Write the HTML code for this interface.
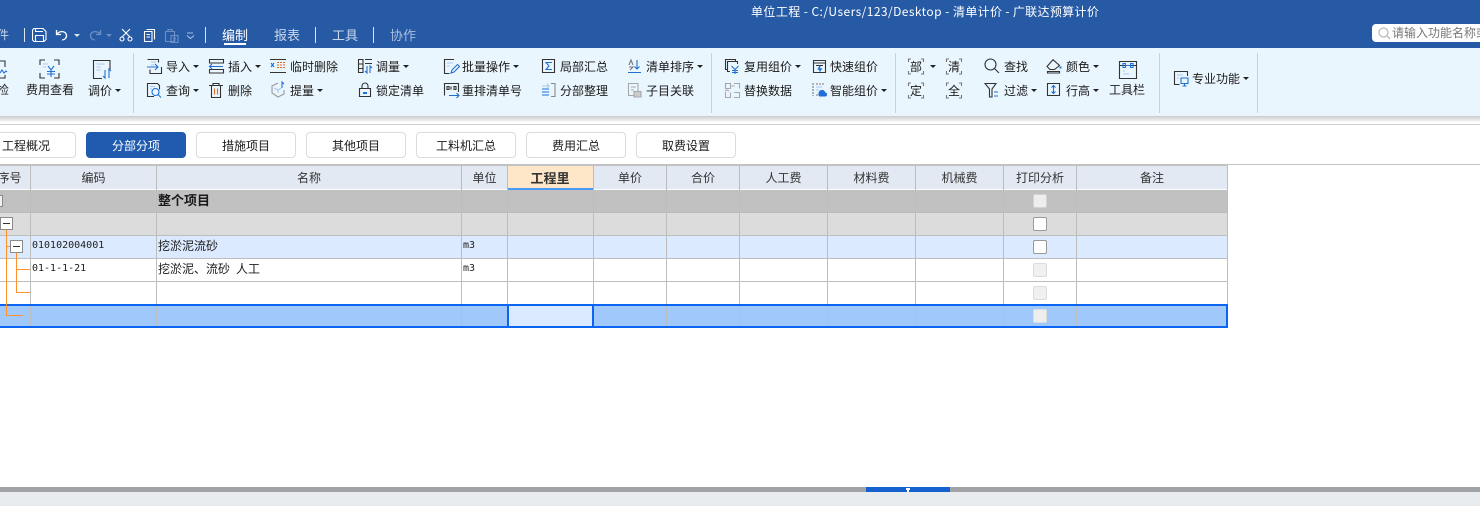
<!DOCTYPE html>
<html lang="zh"><head><meta charset="utf-8"><title>单位工程</title>
<style>
html,body{margin:0;padding:0;width:1480px;height:506px;overflow:hidden;background:#fff}
body{position:relative;font:12px/16px "WenQuanYi Zen Hei","Noto Sans CJK SC",sans-serif;color:#1a1a1a}
div,span,svg{position:absolute;box-sizing:border-box}
.t{white-space:nowrap;line-height:16px;height:16px}
.w{color:#fff}.m{color:#c9d8ec;font-size:14px}
.c{width:0;height:0;border:3px solid transparent;border-top:3.5px solid #222;border-bottom:0}
.sep{width:1px;background:#c9d0d6;top:53px;height:60px}
.tb{top:132px;height:26px;width:100px;background:#fff;border:1px solid #dcdcdc;border-radius:4px;text-align:center;line-height:25px}
.h{top:166px;height:23px;background:#e2e9f2;border-right:1px solid #bdbdbd;text-align:center;line-height:24px;color:#333}
.v{top:166px;height:161px;width:1px;background:#bdbdbd}
.r{left:0;width:1228px;height:23px;border-bottom:1px solid #bdbdbd}
.chk{left:1033px;width:14px;height:14px;border:1px solid #999;border-radius:2px;background:#fff}
.dis{background:#f0f0f0;border-color:#dcdcdc}
.o{background:#ff9326}
.box{width:13px;height:13px;background:#fff;border:1px solid #8b8b8b}
.box:after{content:"";position:absolute;left:2px;top:5px;width:7px;height:1px;background:#333}
.mono{font:10px/16px "DejaVu Sans Mono",monospace;color:#222}
svg{fill:none;stroke:#333;stroke-width:1.1}
svg .b{stroke:#1f6fd6}svg .l{stroke:#a9c8f0}svg .g{stroke:#a8a8a8}
</style></head><body>

<div style="left:0;top:0;width:1480px;height:48px;background:#265aa5"></div>
<div class="t w" style="left:751px;top:4px;letter-spacing:.42px">单位工程 - C:/Users/123/Desktop - </div>
<div class="t w" style="left:953px;top:4px;letter-spacing:.33px">清单计价 - 广联达预算计价</div>
<div class="t m" style="left:-15px;top:27px;font-size:12px">文件</div>
<div style="left:24px;top:28px;width:1px;height:14px;background:#dce6f3"></div>
<svg style="left:32px;top:28px" width="15" height="14"><path stroke="#fff" d="M2 .5h9l3 3v8l-2 2H2l-1.500-1.500V2zM3.500 13.500V7.500h8v6M3.500 .5v3h7.500"/></svg>
<svg style="left:55px;top:28px" width="14" height="14"><path stroke="#fff" stroke-width="1.3" d="M1.500 2v4.500h4.500M1.800 6.500C4 2.500 11 2.500 11.500 7.500c.2 2.500-2 4.500-4.500 4.500"/></svg>
<div class="c" style="left:74px;top:34px;border-top-color:#dce6f3"></div>
<svg style="left:88px;top:28px" width="14" height="14"><path stroke="#6d8fc4" stroke-width="1.3" d="M12.500 2v4.500H8M12.200 6.500C10 2.500 3 2.500 2.500 7.500c-.2 2.500 2 4.500 4.500 4.500"/></svg>
<div class="c" style="left:106px;top:34px;border-top-color:#6d8fc4"></div>
<svg style="left:119px;top:28px" width="14" height="14"><path stroke="#fff" stroke-width="1.100" d="M3 1l8 8M11 1L3 9"/><circle stroke="#fff" cx="3" cy="11" r="2"/><circle stroke="#fff" cx="11" cy="11" r="2"/></svg>
<svg style="left:143px;top:28px" width="13" height="14"><path stroke="#fff" d="M1.500 3.500h7.500v10H1.500zM3.500 1.500h8v10M3.500 6.500h3.500M3.500 9h3.500"/></svg>
<svg style="left:164px;top:28px" width="16" height="15"><path stroke="#6d8fc4" d="M1.500 3.500h9v10h-9zM4 3.500v-2h4v2M7 7.500h7v7H7zM9 10h3M9 12h3"/></svg>
<svg style="left:186px;top:32px" width="9" height="8"><path stroke="#a9bfdf" d="M1 1h6M1 3.500l3.500 3 3.500-3"/></svg>
<div style="left:205px;top:27px;width:1px;height:16px;background:#dce6f3"></div>
<div class="t w" style="left:222px;top:27px;font-size:13px">编制</div>
<div style="left:224px;top:43px;width:22px;height:2px;background:#fff"></div>
<div class="t m" style="left:274px;top:27px;font-size:13px">报表</div>
<div style="left:315px;top:27px;width:1px;height:16px;background:#dce6f3"></div>
<div class="t m" style="left:332px;top:27px;font-size:13px">工具</div>
<div style="left:373px;top:27px;width:1px;height:16px;background:#dce6f3"></div>
<div class="t m" style="left:390px;top:27px;font-size:13px;color:#a9bfdf">协作</div>
<div style="left:1372px;top:24px;width:120px;height:18px;background:#fff;border-radius:4px"></div>
<svg style="left:1378px;top:27px" width="13" height="13"><circle stroke="#bbb" stroke-width="1.300" cx="5.500" cy="5.500" r="4.500"/><path stroke="#bbb" stroke-width="1.300" d="M9 9l3 3"/></svg>
<div class="t" style="left:1392px;top:25px;color:#777">请输入功能名称或</div>

<div style="left:0;top:48px;width:1480px;height:68px;background:#eaf6fe"></div>
<div style="left:0;top:116px;width:1480px;height:6px;background:linear-gradient(#c9cbd0,#fafafa)"></div>
<div style="left:0;top:124px;width:1480px;height:1px;background:#d0d0d0"></div>
<div class="sep" style="left:133px"></div><div class="sep" style="left:711px"></div><div class="sep" style="left:895px"></div><div class="sep" style="left:1159px"></div><div class="sep" style="left:1257px"></div>

<svg style="left:0;top:60px" width="10" height="22"><path d="M0 1h5v6M5 15v3H0"/><path class="b" d="M0 13l2-3 2 3 2-2 1 1"/></svg>
<div class="t" style="left:-3px;top:82px">检</div>
<svg style="left:39px;top:59px" width="22" height="22"><path d="M1 6V1h5M15 1h5v5M1 14v5h5M15 19h5v-5"/><path class="l" d="M4 5h5M4 8h3"/><path class="b" d="M9 7l3 4 3-4M12 11v7M8 12.500h8M8 15h8"/></svg>
<div class="t" style="left:26px;top:82px">费用查看</div>
<svg style="left:92px;top:59px" width="22" height="22"><path d="M10 19.500H1.500v-18h16.500v9"/><path class="l" d="M4.500 5h8M4.500 8h4M4.500 11h4"/><path class="b" d="M13 11v8l-2-2M17 19v-9l2 2"/></svg>
<div class="t" style="left:88px;top:83px">调价</div><div class="c" style="left:115px;top:89px"></div>

<svg style="left:146px;top:58px" width="17" height="17"><path d="M1.500 1.500h11v3M15.500 9v6.500H4v-4"/><path class="l" d="M5 4h5M5 7h3"/><path class="b" d="M1 9h11M9 6l3 3-3 3"/></svg>
<div class="t" style="left:166px;top:59px">导入</div><div class="c" style="left:193px;top:65px"></div>
<svg style="left:146px;top:82px" width="17" height="17"><path d="M8 14.500H1.500v-13h10l2 2v4"/><path class="l" d="M4 4.500h5M4 7h2"/><circle class="b" cx="9.500" cy="10" r="3.500"/><path class="b" d="M12 12.500l3 3"/></svg>
<div class="t" style="left:166px;top:83px">查询</div><div class="c" style="left:193px;top:89px"></div>

<svg style="left:208px;top:58px" width="17" height="17"><path d="M1.500 1.500h14v3.500h-14zM1.500 11.500h14v3.500h-14z"/><path class="b" d="M1 8.500h14M4 6l-2.500 2.500L4 11"/></svg>
<div class="t" style="left:228px;top:59px">插入</div><div class="c" style="left:255px;top:65px"></div>
<svg style="left:208px;top:82px" width="17" height="17"><path d="M1 3.500h14M5 3.500v-2h6v2M3.500 3.500v12h9v-12"/><path style="stroke:#e8661c" d="M6.500 6.500v6M9.500 6.500v6"/></svg>
<div class="t" style="left:228px;top:83px">删除</div>

<svg style="left:270px;top:58px" width="17" height="16"><path d="M0 1.500h16M0 14.500h16"/><path class="b" d="M1 5l3 4M4 5L1 9"/><path style="stroke:#e8661c;stroke-dasharray:2 1" d="M7 4.500h9M7 7h9M7 9.500h9"/></svg>
<div class="t" style="left:290px;top:59px">临时删除</div>
<svg style="left:270px;top:81px" width="17" height="17"><path style="stroke:#999" d="M8 2L2 5v7l6 4 6-3V9"/><path class="l" d="M4 7l4 2 3-2M8 9v3"/><path class="b" d="M12 7V1l2 2"/></svg>
<div class="t" style="left:290px;top:83px">提量</div><div class="c" style="left:317px;top:89px"></div>

<svg style="left:357px;top:58px" width="17" height="16"><path d="M1.500 1.500h4.500v13h-4.500zM1.500 6h4.500M1.500 10.500h4.500M8 1.500h7M8 5.500h7"/><path class="b" d="M10 8v7l-2-2M13 15V8l2 2"/></svg>
<div class="t" style="left:376px;top:59px">调量</div><div class="c" style="left:403px;top:65px"></div>
<svg style="left:358px;top:82px" width="15" height="16"><path d="M1.500 6.500h11v8h-11zM4 6.500V4a3 3 0 0 1 6 0v2.500"/><path class="b" stroke-width="2" d="M5 11h4"/></svg>
<div class="t" style="left:376px;top:83px">锁定清单</div>

<svg style="left:443px;top:58px" width="17" height="17"><path d="M11 1.500H1.500v14h5"/><path class="l" d="M4 5h6M4 8h3"/><path class="b" d="M8 15l1-3 5.500-5.500 2 2L11 14z"/></svg>
<div class="t" style="left:462px;top:59px">批量操作</div><div class="c" style="left:513px;top:65px"></div>
<svg style="left:443px;top:82px" width="17" height="17"><path d="M1.500 13.500V1.500h14V10"/><path d="M4 4.500v3h2v-3zM8 4.500v3M11 4.500v3h2v-3z"/><path class="b" d="M6 13.500h10M13.500 11l2.500 2.500-2.500 2.500"/></svg>
<div class="t" style="left:462px;top:83px">重排清单号</div>

<svg style="left:541px;top:58px" width="15" height="16"><path d="M1.500 1.500h12v13h-12z"/><path class="b" d="M11 4.500H5l3 3.500-3 3.500h6"/></svg>
<div class="t" style="left:560px;top:59px">局部汇总</div>
<svg style="left:541px;top:82px" width="15" height="16"><path style="stroke:#8a8a8a" d="M10 1.500h4v13h-4"/><path class="b" d="M1 7h7M1 10h7M1 13h7"/><path class="l" d="M1 4h7M6 1.500l2 2.500-2 2.500"/></svg>
<div class="t" style="left:560px;top:83px">分部整理</div>

<svg style="left:627px;top:58px" width="15" height="16"><path style="stroke:#777" d="M2 7l2-5 2 5M2 9h4l-3 3"/><path class="b" d="M10 2v9M7.500 8.500L10 11l2.500-2.500M1 14.500h13"/></svg>
<div class="t" style="left:646px;top:59px">清单排序</div><div class="c" style="left:697px;top:65px"></div>
<svg style="left:627px;top:82px" width="15" height="16"><path class="g" d="M11 9V1.500H1.500v12H7M4 5h5M4 8h3"/><path class="g" style="fill:#ccc" d="M7 9.500h7v5.500H7z"/></svg>
<div class="t" style="left:646px;top:83px">子目关联</div>

<svg style="left:724px;top:58px" width="17" height="17"><path d="M3.500 11.500h-2v-10h10v2M6 13.500H3.500v-10h10V6"/><path class="b" d="M7.500 8l3.500 3.500 3.500-3.500M11 11.500V16M8 12.500h6M8 14.500h6"/></svg>
<div class="t" style="left:744px;top:59px">复用组价</div><div class="c" style="left:795px;top:65px"></div>
<svg style="left:724px;top:82px" width="17" height="17"><path class="g" d="M1.500 1.500h5v5h-5zM10 1.500h5.500v5M1.500 10v5.500h5v-5M10 10.500h5.500v5H10M7.500 4h3M1 9l2-1 2 1"/></svg>
<div class="t" style="left:744px;top:83px">替换数据</div>

<svg style="left:812px;top:59px" width="15" height="15"><path d="M1.500 1.500h12v12h-12zM1.500 4h12M4 6.500h7"/><path class="b" stroke-width="1.500" d="M8 7L6.500 10h2.500l-1.500 2.500"/></svg>
<div class="t" style="left:830px;top:59px">快速组价</div>
<svg style="left:811px;top:82px" width="17" height="16"><path style="stroke:#777" stroke-dasharray="2 1" d="M2 1v13M5 2h8M5 13h5"/><path class="l" d="M5 5h6M5 8h3"/><path class="b" style="fill:#1f6fd6" d="M8 12a3 3 0 0 1 6-1c2 0 2 3 0 3H9c-1 0-1-1-1-2z"/></svg>
<div class="t" style="left:830px;top:83px">智能组价</div><div class="c" style="left:881px;top:89px"></div>

<svg style="left:907px;top:58px" width="18" height="17"><path style="stroke:#777" d="M4 1H1.500v3M14 1h2.500v3M1.500 13v3H4M16.500 13v3H14"/></svg>
<div class="t" style="left:910px;top:59px">部</div><div class="c" style="left:930px;top:65px"></div>
<svg style="left:907px;top:82px" width="18" height="17"><path style="stroke:#777" d="M4 1H1.500v3M14 1h2.500v3M1.500 13v3H4M16.500 13v3H14"/></svg>
<div class="t" style="left:910px;top:83px">定</div>
<svg style="left:945px;top:58px" width="18" height="17"><path style="stroke:#777" d="M4 1H1.500v3M14 1h2.500v3M1.500 13v3H4M16.500 13v3H14"/></svg>
<div class="t" style="left:948px;top:59px">清</div>
<svg style="left:945px;top:82px" width="18" height="17"><path style="stroke:#777" d="M4 1H1.500v3M14 1h2.500v3M1.500 13v3H4M16.500 13v3H14"/></svg>
<div class="t" style="left:948px;top:83px">全</div>

<svg style="left:984px;top:58px" width="16" height="16"><circle cx="6.500" cy="6.500" r="5.500"/><path d="M10.500 10.500l4.500 4.500"/></svg>
<div class="t" style="left:1004px;top:59px">查找</div>
<svg style="left:984px;top:82px" width="16" height="16"><path d="M1 1.500h11L8 7v8H5.500V7z"/><path class="b" d="M10 10h4M10 14h4"/></svg>
<div class="t" style="left:1004px;top:83px">过滤</div><div class="c" style="left:1031px;top:89px"></div>

<svg style="left:1046px;top:59px" width="16" height="15"><path d="M7 .7L13.500 6.500 8.500 10.500H4L1 7.500zM1.500 12.500h12v1.500h-12z"/><path class="b" stroke-width="2" d="M13.500 8.500h2"/></svg>
<div class="t" style="left:1066px;top:59px">颜色</div><div class="c" style="left:1093px;top:65px"></div>
<svg style="left:1046px;top:82px" width="15" height="15"><path d="M1.500 1.500h12v12h-12z"/><path class="b" d="M7.500 3.500v8M5.500 5.500l2-2 2 2M5.500 9.500l2 2 2-2"/></svg>
<div class="t" style="left:1066px;top:83px">行高</div><div class="c" style="left:1093px;top:89px"></div>

<svg style="left:1118px;top:60px" width="20" height="20"><path d="M1.500 1.500h17v17h-17zM1.500 5.500h17"/><path class="b" d="M5 3.500h2.500v4H5zM12.500 3.500h2.500v4h-2.500zM7.500 5.500h5"/><path class="l" d="M5 11h2M5 14h6"/></svg>
<div class="t" style="left:1109px;top:82px">工具栏</div>

<svg style="left:1173px;top:70px" width="16" height="17"><path d="M14.500 6V1.500h-13v13h5"/><path class="l" d="M4 5h6M4 8h2"/><path class="b" d="M8 8h7v5.500H8zM11.500 13.500V16M9.500 16h4"/></svg>
<div class="t" style="left:1192px;top:71px">专业功能</div><div class="c" style="left:1243px;top:77px"></div>

<div class="tb" style="left:-24px">工程概况</div>
<div class="tb" style="left:86px;background:#215bb0;border-color:#215bb0;color:#fff">分部分项</div>
<div class="tb" style="left:196px">措施项目</div>
<div class="tb" style="left:306px">其他项目</div>
<div class="tb" style="left:416px">工料机汇总</div>
<div class="tb" style="left:526px">费用汇总</div>
<div class="tb" style="left:636px">取费设置</div>
<div style="left:0;top:164px;width:1480px;height:1px;background:#c4c4c4"></div>
<div style="left:0;top:165px;width:1228px;height:1px;background:#c0c0c0"></div>

<div class="h" style="left:-11px;width:42px">序号</div>
<div class="h" style="left:31px;width:126px">编码</div>
<div class="h" style="left:157px;width:305px">名称</div>
<div class="h" style="left:462px;width:46px">单位</div>
<div class="h" style="left:508px;width:84px;background:#fee6c8;font-weight:bold;font-size:13px;border-right:0">工程里</div>
<div style="left:592px;top:166px;width:2px;height:23px;background:#fee6c8;border-right:1px solid #bdbdbd"></div>
<div style="left:507px;top:188px;width:87px;height:2px;background:#4a9bf5"></div>
<div class="h" style="left:594px;width:73px">单价</div>
<div class="h" style="left:667px;width:73px">合价</div>
<div class="h" style="left:740px;width:88px">人工费</div>
<div class="h" style="left:828px;width:88px">材料费</div>
<div class="h" style="left:916px;width:88px">机械费</div>
<div class="h" style="left:1004px;width:73px">打印分析</div>
<div class="h" style="left:1077px;width:151px">备注</div>

<div class="r" style="top:190px;background:#c1c1c1;border-color:#bababa"></div>
<div class="r" style="top:213px;background:#dcdcdc"></div>
<div class="r" style="top:236px;background:#dceaff"></div>
<div class="r" style="top:259px;background:#fff"></div>
<div class="r" style="top:282px;background:#fff"></div>
<div class="r" style="top:305px;background:#a0c8fb;height:22px;border:0"></div>

<div class="v" style="left:30px"></div><div class="v" style="left:156px"></div><div class="v" style="left:461px"></div><div class="v" style="left:507px"></div><div class="v" style="left:593px"></div><div class="v" style="left:666px"></div><div class="v" style="left:739px"></div><div class="v" style="left:827px"></div><div class="v" style="left:915px"></div><div class="v" style="left:1003px"></div><div class="v" style="left:1076px"></div><div class="v" style="left:1227px"></div>

<div style="left:0;top:304px;width:1228px;height:2px;background:#0a66f0"></div>
<div style="left:0;top:326px;width:1228px;height:2px;background:#0a66f0"></div>
<div style="left:1226px;top:304px;width:2px;height:24px;background:#0a66f0"></div>
<div style="left:507px;top:304px;width:87px;height:24px;background:#dceaff;border:2px solid #0a66f0"></div>

<div class="t" style="left:158px;top:192px;font-weight:bold;font-size:13px">整个项目</div>
<div class="t mono" style="left:32px;top:238px">010102004001</div>
<div class="t" style="left:158px;top:238px">挖淤泥流砂</div>
<div class="t mono" style="left:463px;top:238px">m3</div>
<div class="t mono" style="left:32px;top:261px">01-1-1-21</div>
<div class="t" style="left:158px;top:261px">挖淤泥、流砂</div>
<div class="t" style="left:236px;top:261px">人工</div>
<div class="t mono" style="left:463px;top:261px">m3</div>

<div class="o" style="left:6px;top:230px;width:1px;height:86px"></div>
<div class="o" style="left:6px;top:315px;width:17px;height:1px"></div>
<div class="o" style="left:6px;top:246px;width:4px;height:1px"></div>
<div class="o" style="left:16px;top:253px;width:1px;height:39px"></div>
<div class="o" style="left:16px;top:269px;width:14px;height:1px"></div>
<div class="o" style="left:16px;top:292px;width:14px;height:1px"></div>
<div class="box" style="left:0;top:217px"></div>
<div class="box" style="left:10px;top:240px"></div>
<div style="left:-8px;top:195px;width:11px;height:12px;background:#f0f0f0;border:1px solid #888"></div>

<div class="chk dis" style="top:194px;background:#eee;border-color:#d4d4d4"></div>
<div class="chk" style="top:217px"></div>
<div class="chk" style="top:240px"></div>
<div class="chk dis" style="top:263px"></div>
<div class="chk dis" style="top:286px"></div>
<div class="chk dis" style="top:309px;background:#eee"></div>

<div style="left:0;top:487px;width:1480px;height:5px;background:#a2a3a7"></div>
<div style="left:866px;top:487px;width:84px;height:5px;background:#1561cf"></div>
<div style="left:906px;top:488px;width:4px;height:2px;background:#fff"></div>
<div style="left:907px;top:490px;width:2px;height:2px;background:#fff"></div>
<div style="left:0;top:492px;width:1480px;height:14px;background:#e9ecef"></div>
</body></html>
